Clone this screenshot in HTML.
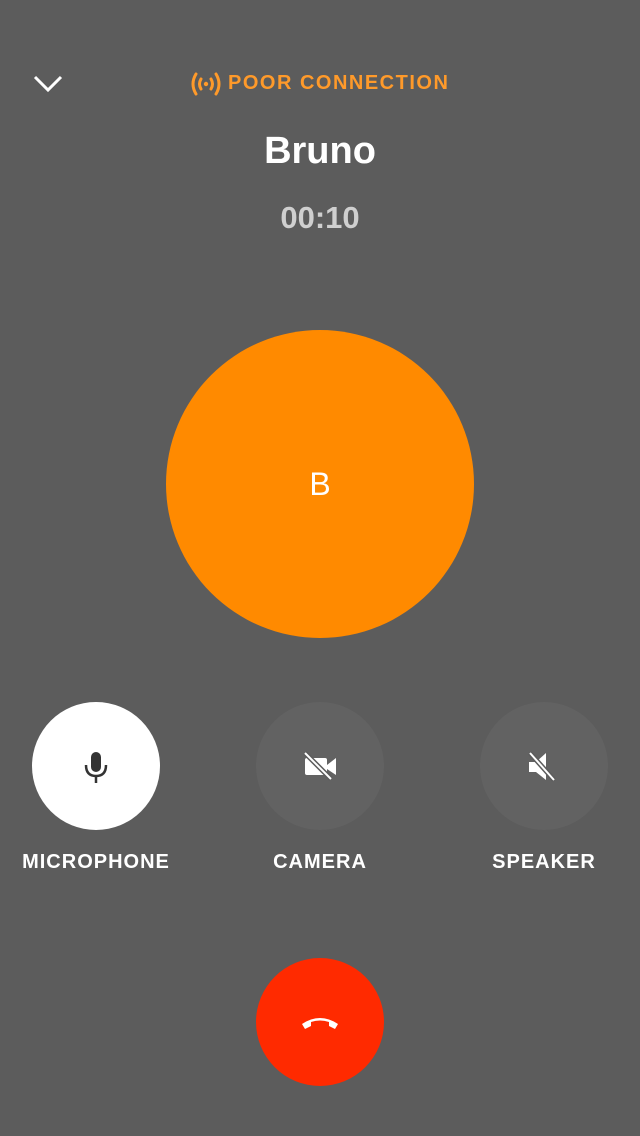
<!DOCTYPE html>
<html><head><style>
body{margin:0;width:640px;height:1136px;background:#5c5c5c;font-family:"Liberation Sans",sans-serif;position:relative;overflow:hidden}
.a{position:absolute}
.c{border-radius:50%}
.lbl{color:#fff;font-size:20px;font-weight:bold;width:220px;text-align:center;top:851px;letter-spacing:1px}
</style></head><body>
<svg class="a" style="left:32px;top:74px" width="32" height="20" viewBox="0 0 32 20"><path d="M3 3 L16 16 L29 3" stroke="#fff" stroke-width="3" fill="none"/></svg>
<svg class="a" style="left:189px;top:71px" width="34" height="26" viewBox="0 0 34 26"><g stroke="#ff9a2a" stroke-width="3" fill="none" stroke-linecap="round"><path d="M7 3 Q1 13 7 23"/><path d="M27 3 Q33 13 27 23"/><path d="M12 8 Q9 13 12 18"/><path d="M22 8 Q25 13 22 18"/></g><circle cx="17" cy="13" r="2.2" fill="#ff9a2a"/></svg>
<div class="a" style="left:228px;top:72px;color:#ff9a2a;font-size:20px;font-weight:bold;letter-spacing:1.5px">POOR CONNECTION</div>
<div class="a" style="left:0;width:640px;top:130px;text-align:center;color:#fff;font-size:38px;font-weight:bold">Bruno</div>
<div class="a" style="left:0;width:640px;top:200px;text-align:center;color:#cfcfcf;font-size:31px;font-weight:bold">00:10</div>
<div class="a c" style="left:166px;top:330px;width:308px;height:308px;background:#ff8a00;color:#fff;font-size:32px;line-height:308px;text-align:center">B</div>
<div class="a c" style="left:32px;top:702px;width:128px;height:128px;background:#fff"></div>
<svg class="a" style="left:82px;top:750px" width="28" height="34" viewBox="0 0 28 34"><rect x="9" y="2" width="10" height="20" rx="5" fill="#333"/><path d="M4 15 Q4 26 14 26 Q24 26 24 15" stroke="#333" stroke-width="2.5" fill="none"/><path d="M14 26 V33" stroke="#333" stroke-width="2.5"/></svg>
<div class="a c" style="left:256px;top:702px;width:128px;height:128px;background:#626262"></div>
<svg class="a" style="left:302px;top:751px" width="36" height="30" viewBox="0 0 36 30"><rect x="3" y="7" width="22" height="17" rx="2" fill="#fff"/><path d="M25 14 L34 7 V24 L25 18Z" fill="#fff"/><path d="M3 2 L29 28" stroke="#5c5c5c" stroke-width="5"/><path d="M3 2 L29 28" stroke="#fff" stroke-width="2"/></svg>
<div class="a c" style="left:480px;top:702px;width:128px;height:128px;background:#626262"></div>
<svg class="a" style="left:526px;top:750px" width="32" height="34" viewBox="0 0 32 34"><path d="M3 12 H10 L20 3 V30 L10 22 H3Z" fill="#fff"/><path d="M4 3 L28 30" stroke="#5c5c5c" stroke-width="5"/><path d="M4 3 L28 30" stroke="#fff" stroke-width="2"/></svg>
<div class="a lbl" style="left:-14px">MICROPHONE</div>
<div class="a lbl" style="left:210px">CAMERA</div>
<div class="a lbl" style="left:434px">SPEAKER</div>
<div class="a c" style="left:256px;top:958px;width:128px;height:128px;background:#ff2a00"></div>
<svg class="a" style="left:299px;top:1012px" width="42" height="20" viewBox="0 0 42 20"><path d="M3 12 Q21 0 39 12 L36 17 L30 14 L30 10 Q21 7 12 10 L12 14 L6 17Z" fill="#fff"/></svg>
</body></html>
